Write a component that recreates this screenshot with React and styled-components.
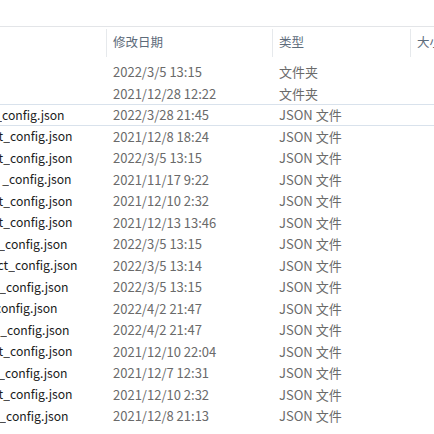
import React from 'react'
import styled, { createGlobalStyle } from 'styled-components'

const GlobalStyle = createGlobalStyle`
  html, body {
    margin: 0;
    background: #ffffff;
    overflow: hidden;
  }
  body {
    font-family: "Noto Sans CJK SC", "Noto Sans", sans-serif;
  }
`

const Pane = styled.div`
  width: 434px;
  height: 434px;
  overflow: hidden;
  padding-top: 26px;
  box-sizing: border-box;
`

const Table = styled.div`
  margin-left: -12px;
  width: 560px;
`

const Header = styled.div`
  display: grid;
  grid-template-columns: 118px 166px 138px 138px;
  border-top: 1px solid #e3e5e8;
  height: 31px;
  box-sizing: border-box;
`

const HeaderCell = styled.div`
  margin-top: 2px;
  border-left: ${p => (p.$first ? 'none' : '1px solid #e6e9ec')};
  padding-left: 6px;
  padding-bottom: 4px;
  display: flex;
  align-items: center;
  font-size: 12.5px;
  color: #5d6b7a;
  white-space: nowrap;
`

const Body = styled.div`
  margin-top: 4px;
`

const Row = styled.div`
  display: grid;
  grid-template-columns: 118px 166px 138px 138px;
  height: 21.5px;
  box-sizing: border-box;
  align-items: center;
  border-top: 1px solid ${p => (p.$outlined ? '#d9e2ec' : 'transparent')};
  border-bottom: 1px solid ${p => (p.$outlined ? '#d9e2ec' : 'transparent')};
`

const NameCell = styled.div`
  display: flex;
  align-items: center;
  font-size: 12.2px;
  color: #1b1b1b;
  white-space: nowrap;
  overflow: hidden;
`

const Prefix = styled.span`
  display: flex;
  justify-content: flex-end;
  overflow: hidden;
  flex-shrink: 0;
`

const Cell = styled.div`
  padding-left: 7px;
  font-size: 13px;
  color: #6a6a6a;
  white-space: nowrap;
  overflow: hidden;
`

const files = [
  { folder: true, date: '2022/3/5 13:15' },
  { folder: true, date: '2021/12/28 12:22' },
  { prefix: '_', cut: 2, date: '2022/3/28 21:45', outlined: true },
  { prefix: 'project_', cut: 10, date: '2021/12/8 18:24' },
  { prefix: 'project_', cut: 10, date: '2022/3/5 13:15' },
  { prefix: '_', cut: 9, date: '2021/11/17 9:22' },
  { prefix: 'project_', cut: 10, date: '2021/12/10 2:32' },
  { prefix: 'project_', cut: 10, date: '2021/12/13 13:46' },
  { prefix: '_', cut: 5, date: '2022/3/5 13:15' },
  { prefix: 'project_', cut: 15, date: '2022/3/5 13:14' },
  { prefix: '_', cut: 6, date: '2022/3/5 13:15' },
  { prefix: '_', cut: -5, date: '2022/4/2 21:47' },
  { prefix: '_', cut: 7, date: '2022/4/2 21:47' },
  { prefix: 'project_', cut: 10, date: '2021/12/10 22:04' },
  { prefix: '_', cut: 5, date: '2021/12/7 12:31' },
  { prefix: 'project_', cut: 10, date: '2021/12/10 2:32' },
  { prefix: '_', cut: 6, date: '2021/12/8 21:13' },
]

export default function App() {
  return (
    <Pane>
      <GlobalStyle />
      <Table>
        <Header>
          <HeaderCell $first />
          <HeaderCell>修改日期</HeaderCell>
          <HeaderCell>类型</HeaderCell>
          <HeaderCell>大小</HeaderCell>
        </Header>
        <Body>
          {files.map((f, i) => (
            <Row key={i} $outlined={f.outlined}>
              <NameCell>
                {!f.folder && (
                  <>
                    <Prefix style={{ width: Math.max(f.cut + 12, 0) }}>{f.prefix}</Prefix>
                    <span style={{ marginLeft: Math.min(f.cut + 12, 0) }}>config.json</span>
                  </>
                )}
              </NameCell>
              <Cell>{f.date}</Cell>
              <Cell>{f.folder ? '文件夹' : 'JSON 文件'}</Cell>
              <Cell />
            </Row>
          ))}
        </Body>
      </Table>
    </Pane>
  )
}
